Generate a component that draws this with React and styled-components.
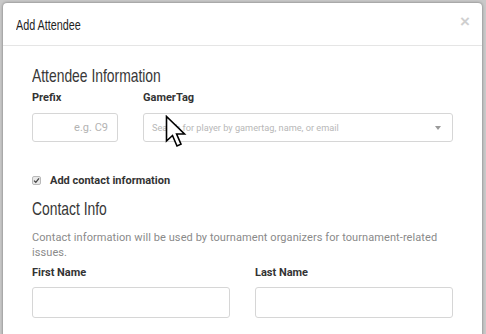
import React from "react";
import styled, { createGlobalStyle } from "styled-components";

const Global = createGlobalStyle`
  html, body {
    margin: 0;
    padding: 0;
    height: 334px;
    overflow: hidden;
    background: #c9c9c9;
    font-family: Roboto, "Liberation Sans", sans-serif;
  }
`;

const Modal = styled.div`
  position: relative;
  margin: 3px 4px 0 3px;
  width: 479px;
  height: 360px;
  background: #fff;
  border-radius: 4px;
  box-shadow: 0 0 3px rgba(0, 0, 0, 0.45);
`;

const Header = styled.div`
  height: 42px;
  display: flex;
  align-items: center;
  justify-content: space-between;
  padding: 0 12px 0 13px;
  border-bottom: 1px solid #e5e5e5;
`;

/* condensed display face: scale a plain sans horizontally */
const ModalTitle = styled.h4`
  margin: 0;
  font-family: "Liberation Sans", sans-serif;
  font-weight: 400;
  font-size: 15px;
  color: #1e1e1e;
  transform: scaleX(0.72);
  transform-origin: left center;
`;

const Close = styled.span`
  font-family: "Liberation Sans", sans-serif;
  font-size: 17px;
  font-weight: 700;
  line-height: 1;
  color: #cfcfcf;
  margin-top: -6px;
`;

const Body = styled.div`
  padding: 18px 29px 0;
`;

const Heading = styled.h3`
  margin: ${(p) => p.$top || 0}px 0 0;
  font-family: "Liberation Sans", sans-serif;
  font-weight: 400;
  font-size: 19px;
  line-height: 24px;
  color: #383838;
  transform: scaleX(0.73);
  transform-origin: left center;
`;

const Row = styled.div`
  display: grid;
  grid-template-columns: ${(p) => p.$cols};
  column-gap: 25px;
  margin-top: ${(p) => p.$top || 0}px;
`;

const Field = styled.div`
  display: flex;
  flex-direction: column;
`;

const Label = styled.label`
  font-size: 11px;
  font-weight: 700;
  color: #333;
  line-height: 14px;
  margin-bottom: ${(p) => p.$gap || 7}px;
`;

const Input = styled.input`
  box-sizing: border-box;
  height: ${(p) => p.$h || 29}px;
  width: 100%;
  border: 1px solid #d6d6d6;
  border-radius: 3px;
  padding: 0 9px;
  font-family: Roboto, sans-serif;
  font-size: 11px;
  text-align: ${(p) => p.$align || "left"};
  outline: none;
  &::placeholder {
    color: #b3b3b3;
  }
`;

const Select = styled.div`
  box-sizing: border-box;
  height: 29px;
  border: 1px solid #d6d6d6;
  border-radius: 3px;
  padding: 0 11px 0 8px;
  display: flex;
  align-items: center;
  justify-content: space-between;
  font-size: 9.2px;
  color: #b8b8b8;
`;

const Caret = styled.span`
  width: 0;
  height: 0;
  border-left: 3.5px solid transparent;
  border-right: 3.5px solid transparent;
  border-top: 4px solid #9a9a9a;
`;

const CheckRow = styled.label`
  display: flex;
  align-items: center;
  gap: 9px;
  margin-top: 32px;
  font-size: 11px;
  font-weight: 700;
  color: #333;
`;

const Box = styled.span`
  box-sizing: border-box;
  width: 9px;
  height: 9px;
  border: 1px solid #b9b9b9;
  border-radius: 2px;
  background: #e9e9e9;
  display: flex;
  align-items: center;
  justify-content: center;
`;

const Help = styled.p`
  margin: 9px 0 0;
  font-size: 11px;
  letter-spacing: 0.08px;
  line-height: 15px;
  color: #8a8a8a;
`;

const Pointer = styled.svg`
  position: absolute;
  left: 162px;
  top: 112px;
`;

export default function App() {
  return (
    <>
      <Global />
      <Modal>
        <Header>
          <ModalTitle>Add Attendee</ModalTitle>
          <Close>×</Close>
        </Header>
        <Body>
          <Heading>Attendee Information</Heading>
          <Row $cols="86px 1fr" $top={3}>
            <Field>
              <Label $gap={8}>Prefix</Label>
              <Input $align="right" placeholder="e.g. C9" />
            </Field>
            <Field>
              <Label $gap={8}>GamerTag</Label>
              <Select>
                <span>Search for player by gamertag, name, or email</span>
                <Caret />
              </Select>
            </Field>
          </Row>
          <CheckRow>
            <Box>
              <svg width="7" height="7" viewBox="0 0 7 7">
                <path d="M1 3.6 L2.8 5.3 L6 1.4" fill="none" stroke="#444" strokeWidth="1.3" />
              </svg>
            </Box>
            Add contact information
          </CheckRow>
          <Heading $top={10}>Contact Info</Heading>
          <Help>
            Contact information will be used by tournament organizers for tournament-related issues.
          </Help>
          <Row $cols="1fr 1fr" $top={6}>
            <Field>
              <Label>First Name</Label>
              <Input $h={31} />
            </Field>
            <Field>
              <Label>Last Name</Label>
              <Input $h={31} />
            </Field>
          </Row>
        </Body>
        <Pointer width="24" height="36" viewBox="0 0 24 36">
          <path
            d="M1.5 1.5 L1.5 26 L7.5 20.5 L12 31 L16 29.2 L11.6 19 L19.5 19 Z"
            fill="#fff"
            stroke="#000"
            strokeWidth="1.6"
            strokeLinejoin="miter"
          />
        </Pointer>
      </Modal>
    </>
  );
}
